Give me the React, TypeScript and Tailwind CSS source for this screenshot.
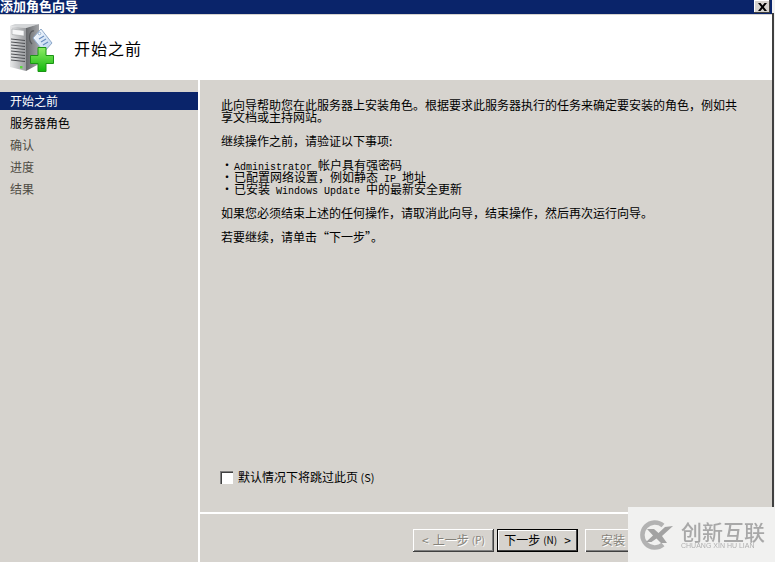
const cjk = "font-['Noto_Sans_CJK_SC','Liberation_Sans',sans-serif]";
const mono = "font-['Liberation_Mono',monospace] text-[10px] whitespace-pre";

function ServerIcon() {
  return (
    <svg width="44" height="48" viewBox="0 0 44 48" className="shrink-0">
      <defs>
        <linearGradient id="front" x1="0" y1="0" x2="1" y2="0">
          <stop offset="0" stopColor="#e8e9ea" />
          <stop offset="1" stopColor="#9a9c9f" />
        </linearGradient>
        <linearGradient id="side" x1="0" y1="0" x2="1" y2="0">
          <stop offset="0" stopColor="#66686b" />
          <stop offset="1" stopColor="#a4a6a9" />
        </linearGradient>
        <linearGradient id="tag" x1="0" y1="0" x2="1" y2="1">
          <stop offset="0" stopColor="#ffffff" />
          <stop offset="1" stopColor="#b4cfee" />
        </linearGradient>
        <linearGradient id="plus" x1="0" y1="0" x2="0" y2="1">
          <stop offset="0" stopColor="#8fec66" />
          <stop offset="1" stopColor="#10b80c" />
        </linearGradient>
      </defs>
      <path d="M0 2 L5 0 L29 0 L16 4 Z" fill="#d4d6d8" />
      <path d="M0 2 L16 4 L16 47 L0 43 Z" fill="url(#front)" />
      <path d="M16 4 L29 0 L29 40 L16 47 Z" fill="url(#side)" />
      <path d="M2 5 L14 6.5 L14 12 L2 10.5 Z" fill="#f6f7f8" stroke="#a0a2a5" strokeWidth="0.6" />
      <g stroke="#4e5054" strokeWidth="1">
        <path d="M1 15 L15 16.5" />
        <path d="M1 18 L15 19.5" />
        <path d="M1 21 L15 22.5" />
        <path d="M1 24 L15 25.5" />
        <path d="M1 27 L15 28.5" />
        <path d="M1 30 L15 31.5" />
        <path d="M1 33 L15 34.5" />
        <path d="M1 36 L15 37.5" />
      </g>
      <rect x="10" y="42" width="2.5" height="2.5" fill="#58d53c" />
      <path d="M24 7 C19 6 18 16 22 20" fill="none" stroke="#55575a" strokeWidth="1.2" />
      <path d="M23 14 L31 5 L42 19 L34 28 Z" fill="url(#tag)" stroke="#8fa9c9" strokeLinejoin="round" />
      <circle cx="29.5" cy="9.5" r="1.3" fill="#ffffff" stroke="#7f9fc4" strokeWidth="0.8" />
      <path d="M29 15 L34 12 M31 18 L36 15 M33 21 L38 18" stroke="#6a8ec0" strokeWidth="1.2" />
      <path
        d="M28 23.5 H36 V31.5 H43.5 V39.5 H36 V47.5 H28 V39.5 H20.5 V31.5 H28 Z"
        fill="url(#plus)"
        stroke="#1c9416"
      />
    </svg>
  );
}

function LogoMark() {
  return (
    <svg width="34" height="30" viewBox="0 0 34 30" className="shrink-0">
      <path d="M24 5.5 A12.5 12.5 0 1 0 24 24.5" fill="none" stroke="#b2b2b2" strokeWidth="4.5" />
      <path d="M8 9 L15 9 L19.5 13 L26 7 L34 6 L23 16 L28 23 L22 23 L17.5 18.5 L12.5 22 L7 22 L14 15.5 Z" fill="#a2a2a2" />
    </svg>
  );
}

function NavItem({ label, state }: { label: string; state: "active" | "normal" | "muted" }) {
  const cls =
    state === "active"
      ? "bg-[#0a246a] text-white"
      : state === "normal"
        ? "text-black"
        : "text-[#4f4c44]";
  return <div className={`h-[18px] pl-[10px] leading-[18px] mb-[4px] ${cls}`}>{label}</div>;
}

export default function App() {
  return (
    <div className={`${cjk} w-[775px] h-[562px] overflow-hidden bg-[#f2f2f2] text-[12px] text-black flex relative`}>
      <div className="w-[772px] shrink-0 flex flex-col bg-[#d6d3ce]">
        {/* title bar */}
        <div className="h-[15px] shrink-0 bg-[#0a246a] flex items-start justify-between border-b border-[#d6d3ce] pr-[2px]">
          <span className="text-white font-bold text-[13px] leading-[13px] -mt-[1px]">添加角色向导</span>
          <div className="w-[16px] h-[13px] bg-[#d6d3ce] flex items-center justify-center shadow-[inset_-1px_-1px_0_#404040,inset_1px_1px_0_#ffffff]">
            <svg width="9" height="8" viewBox="0 0 9 8">
              <path d="M0 0 L2.5 0 L4.5 2.6 L6.5 0 L9 0 L5.8 4 L9 8 L6.5 8 L4.5 5.4 L2.5 8 L0 8 L3.2 4 Z" fill="#000" />
            </svg>
          </div>
        </div>

        {/* header */}
        <div className="h-[65px] shrink-0 bg-white flex items-start pt-[9px] pl-[10px] gap-[20px]">
          <ServerIcon />
          <h1 className="text-[16px] leading-[16px] font-normal tracking-[1px] mt-[16px]">开始之前</h1>
        </div>

        <div className="flex-1 flex min-h-0">
          {/* sidebar */}
          <aside className="w-[198px] shrink-0 pt-[12px]">
            <NavItem label="开始之前" state="active" />
            <NavItem label="服务器角色" state="normal" />
            <NavItem label="确认" state="muted" />
            <NavItem label="进度" state="muted" />
            <NavItem label="结果" state="muted" />
          </aside>
          <div className="w-[2px] shrink-0 bg-white" />

          {/* content */}
          <main className="flex-1 flex flex-col min-w-0">
            <div className="flex-1 pt-[19px] pl-[21px] pr-[33px] leading-[12px]">
              <p>此向导帮助您在此服务器上安装角色。根据要求此服务器执行的任务来确定要安装的角色，例如共享文档或主持网站。</p>
              <p className="mt-[12px]">继续操作之前，请验证以下事项:</p>
              <ul className="mt-[12px]">
                <li className="flex h-[12px]">
                  <span className="w-[13px] shrink-0">·</span>
                  <span className="whitespace-nowrap">
                    <span className={mono}>Administrator </span>帐户具有强密码
                  </span>
                </li>
                <li className="flex h-[12px]">
                  <span className="w-[13px] shrink-0">·</span>
                  <span className="whitespace-nowrap">
                    已配置网络设置，例如静态<span className={mono}> IP </span>地址
                  </span>
                </li>
                <li className="flex h-[12px]">
                  <span className="w-[13px] shrink-0">·</span>
                  <span className="whitespace-nowrap">
                    已安装<span className={mono}> Windows Update </span>中的最新安全更新
                  </span>
                </li>
              </ul>
              <p className="mt-[12px]">如果您必须结束上述的任何操作，请取消此向导，结束操作，然后再次运行向导。</p>
              <p className="mt-[12px]">若要继续，请单击“下一步”。</p>
            </div>
            <label className="h-[14px] mb-[28px] pl-[20px] flex items-center gap-[5px]">
              <span className="w-[13px] h-[13px] bg-white shadow-[inset_1px_1px_0_#808080,inset_2px_2px_0_#404040,inset_-1px_-1px_0_#ffffff]" />
              <span>
                默认情况下将跳过此页<span className="text-[11px]"> (S)</span>
              </span>
            </label>
            <div className="h-[2px] bg-white" />
            <div className="h-[48px] flex items-start pt-[15px] pl-[213px]">
              <div className="w-[81px] h-[23px] pb-[2px] flex items-center justify-center text-[#85827a] [text-shadow:1px_1px_0_#ffffff] shadow-[inset_-1px_-1px_0_#404040,inset_1px_1px_0_#ffffff,inset_-2px_-2px_0_#808080]">
                <span className="mr-[4px]">&lt;</span>上一步<span className="text-[10px] ml-[3px]">(P)</span>
              </div>
              <div className="w-[81px] h-[23px] ml-[3px] pb-[2px] flex items-center justify-center border border-black shadow-[inset_-1px_-1px_0_#404040,inset_1px_1px_0_#ffffff]">
                下一步<span className="text-[10px] ml-[3px]">(N)</span>
                <span className="ml-[7px]">&gt;</span>
              </div>
              <div className="w-[56px] h-[23px] ml-[7px] pb-[2px] flex items-center justify-center text-[#85827a] [text-shadow:1px_1px_0_#ffffff] shadow-[inset_1px_1px_0_#ffffff,inset_0_-1px_0_#404040,inset_0_-2px_0_#808080]">
                安装
              </div>
            </div>
          </main>
        </div>
      </div>
      <div className="w-[2px] shrink-0 mt-[13px] bg-[#404040]" />

      {/* watermark */}
      <div className="absolute right-0 bottom-0 w-[147px] h-[55px] bg-[#f1f1f0] flex items-center pl-[11px] gap-[8px]">
        <LogoMark />
        <div className="flex flex-col blur-[0.3px]">
          <span className="text-[21px] leading-[22px] font-medium text-[#a8a8a8] whitespace-nowrap">创新互联</span>
          <span className="font-['Liberation_Sans',sans-serif] text-[7px] leading-[8px] text-[#b0b0b0] whitespace-nowrap">CHUANG XIN HU LIAN</span>
        </div>
      </div>
    </div>
  );
}
